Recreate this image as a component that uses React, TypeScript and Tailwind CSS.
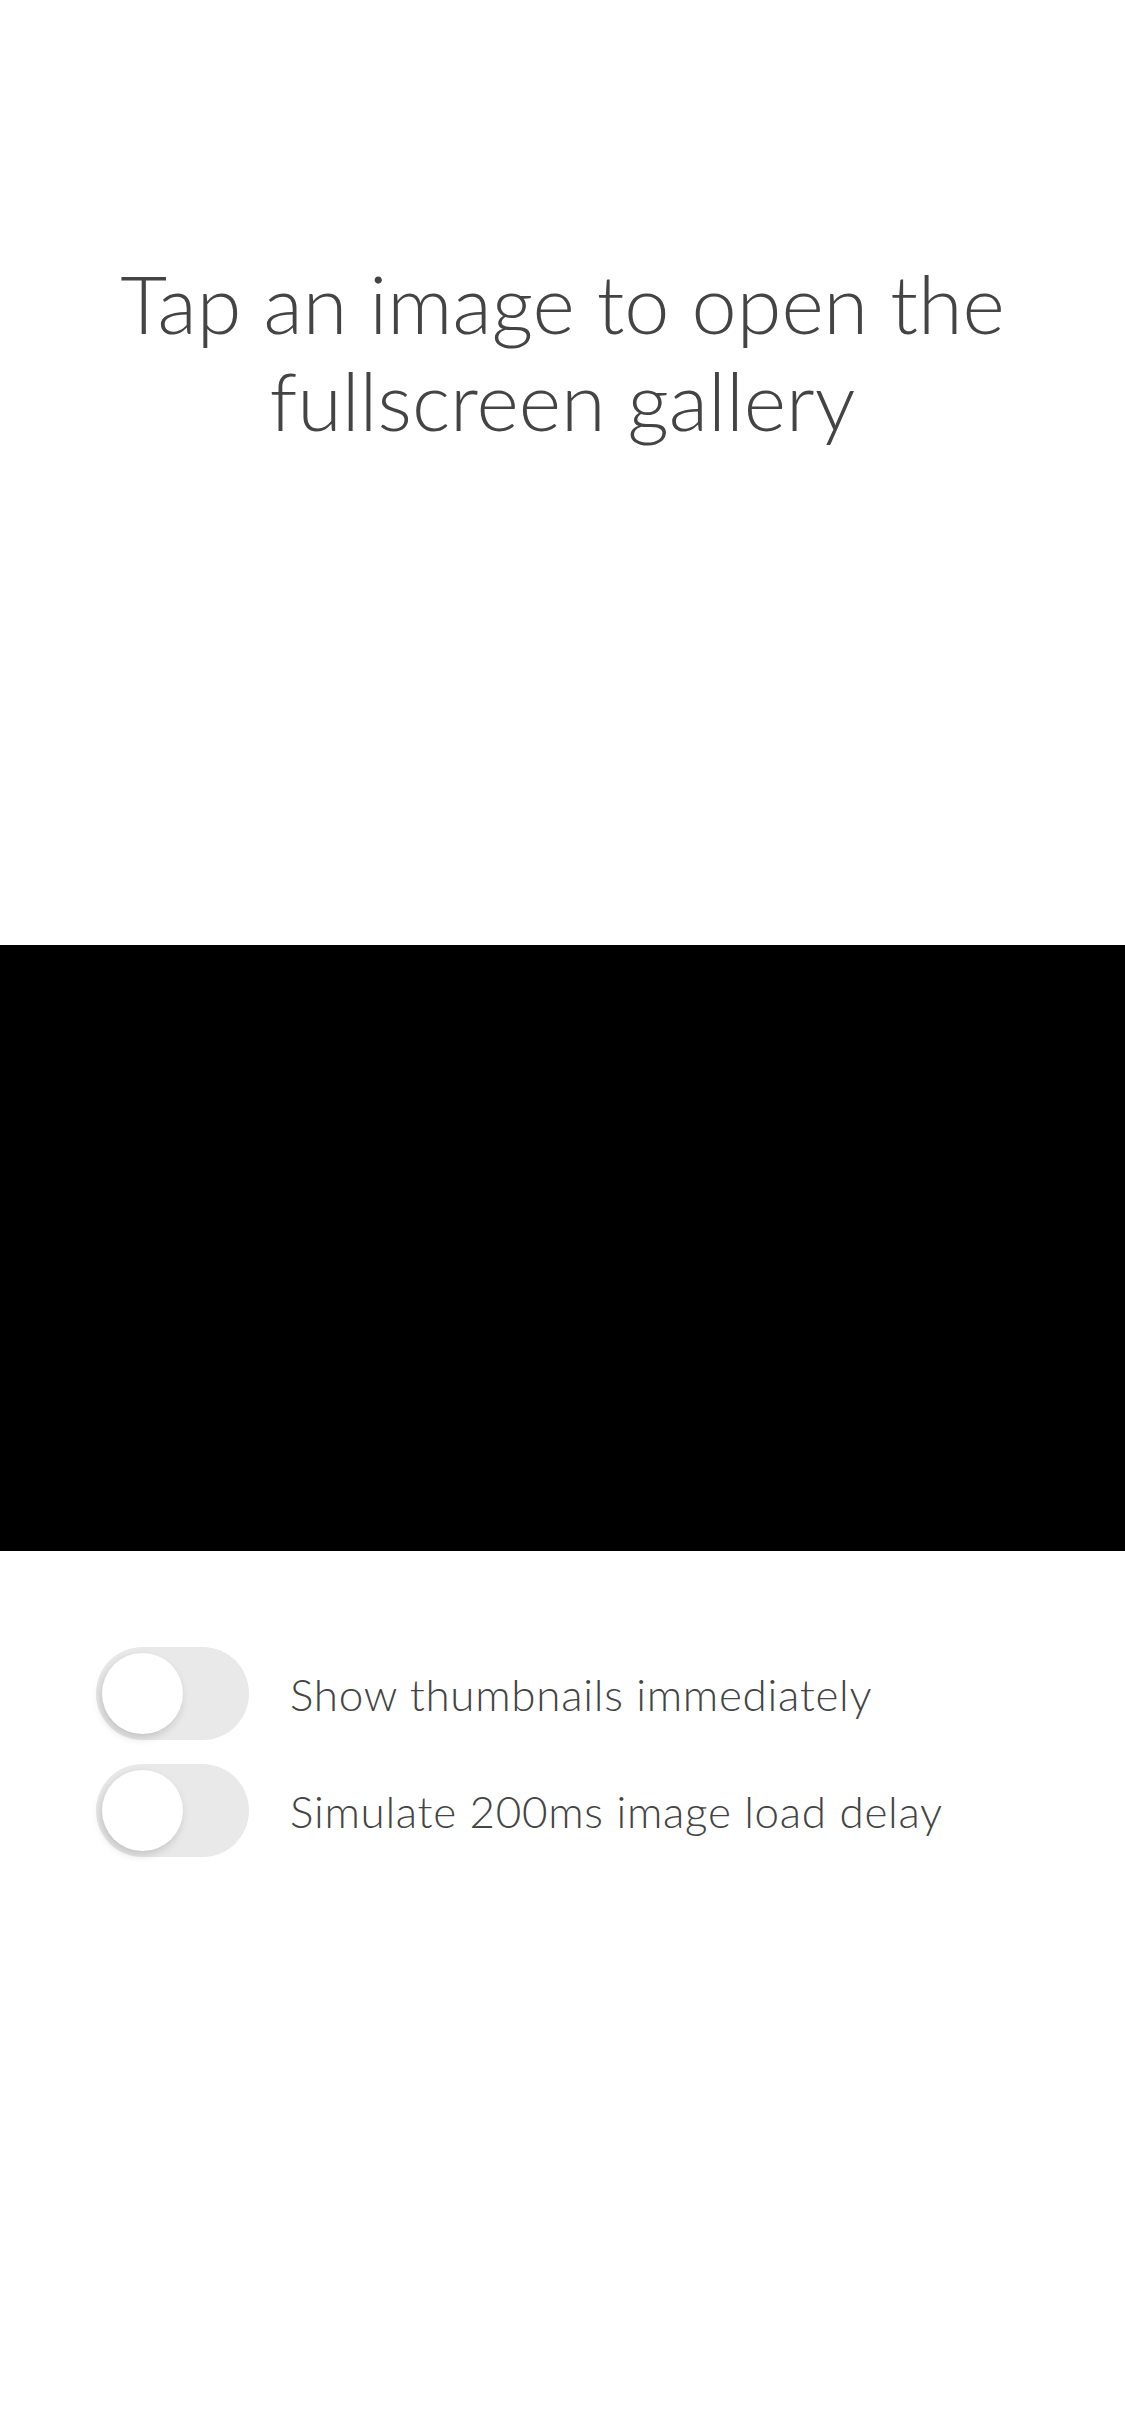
import { useState } from 'react'

interface ToggleRowProps {
  label: string
  checked: boolean
  onChange: (v: boolean) => void
}

function ToggleRow({ label, checked, onChange }: ToggleRowProps) {
  return (
    <label className="flex items-center gap-[41px] cursor-pointer">
      <button
        type="button"
        onClick={() => onChange(!checked)}
        className={`relative flex h-[93px] w-[153px] shrink-0 items-center rounded-full p-[6px] ${
          checked ? 'bg-[#4cd964] justify-end' : 'bg-[#e9e9e9] justify-start'
        }`}
      >
        <span className="block size-[81px] rounded-full bg-white shadow-[-2px_4px_8px_rgba(0,0,0,0.16)]" />
      </button>
      <span className="whitespace-nowrap text-[44px] font-light leading-none tracking-[0.7px] text-[#444444]">
        {label}
      </span>
    </label>
  )
}

export default function App() {
  const [thumbs, setThumbs] = useState(false)
  const [delay, setDelay] = useState(false)

  return (
    <div className="min-h-[2436px] w-full overflow-hidden bg-white font-['Lato',sans-serif]">
      <h1 className="px-[90px] pt-[254px] text-center text-[81px] font-light leading-[97px] text-[#444444]">
        Tap an image to open the fullscreen gallery
      </h1>

      <div className="mt-[497px] h-[606px] w-full bg-black" />

      <div className="flex flex-col gap-[24px] pl-[96px] pt-[96px]">
        <ToggleRow label="Show thumbnails immediately" checked={thumbs} onChange={setThumbs} />
        <ToggleRow label="Simulate 200ms image load delay" checked={delay} onChange={setDelay} />
      </div>
    </div>
  )
}
